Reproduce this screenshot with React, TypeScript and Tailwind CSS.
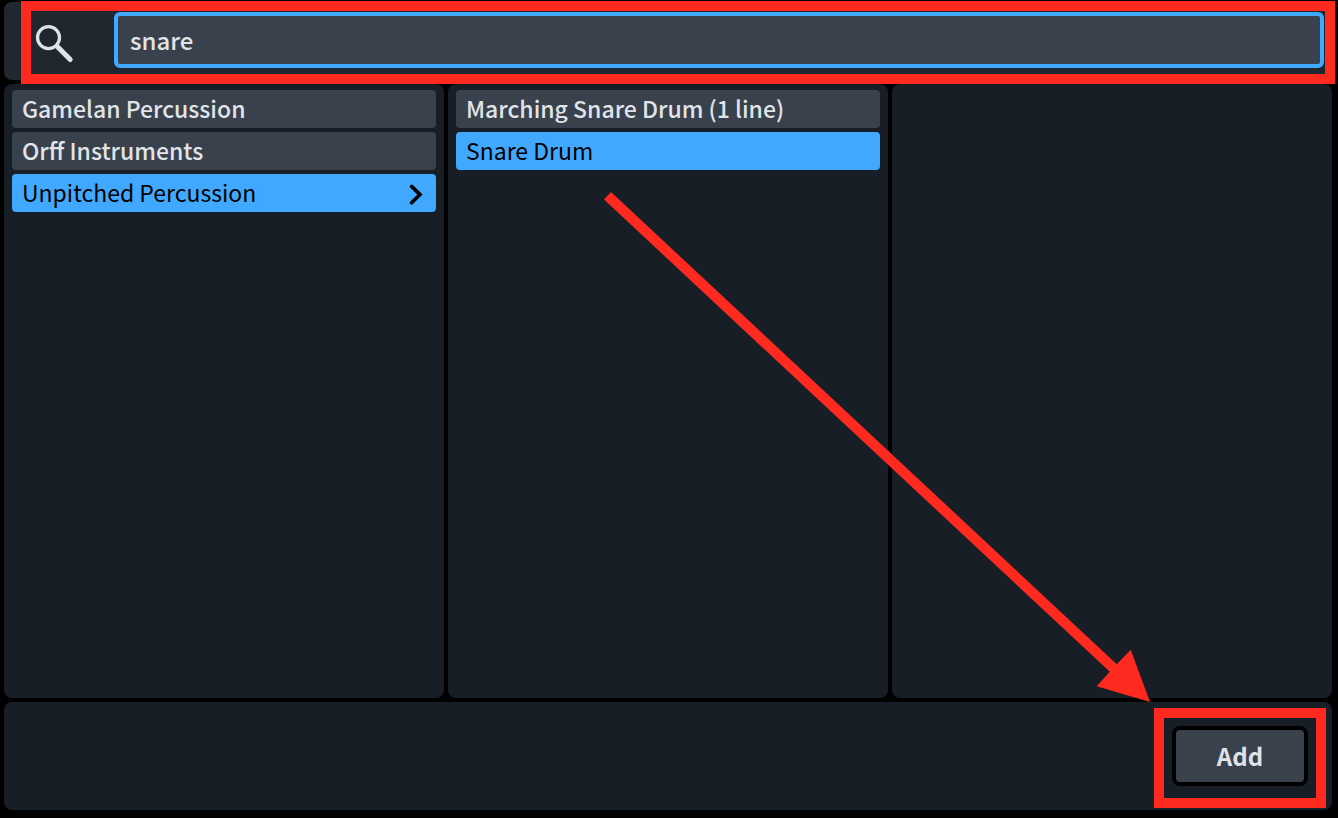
import { useState } from "react";

type Item = { name: string; hasChildren?: boolean };

const families: Item[] = [
  { name: "Gamelan Percussion" },
  { name: "Orff Instruments" },
  { name: "Unpitched Percussion", hasChildren: true },
];

const instruments: Item[] = [
  { name: "Marching Snare Drum (1 line)" },
  { name: "Snare Drum" },
];

function SearchIcon() {
  return (
    <svg viewBox="0 0 40 40" className="h-10 w-10" fill="none" stroke="#dfe2e8" aria-hidden="true">
      <circle cx="14.5" cy="13.6" r="11" strokeWidth="3.3" />
      <path d="M23 22.3L36.2 35.6" strokeWidth="5" strokeLinecap="round" />
    </svg>
  );
}

function Column({
  label,
  items,
  selected,
  onSelect,
}: {
  label: string;
  items: Item[];
  selected?: string;
  onSelect?: (name: string) => void;
}) {
  return (
    <section aria-label={label} className="rounded-lg bg-[#171e25] px-2 py-1.5">
      <ul className="flex flex-col gap-1">
        {items.map((item) => {
          const active = item.name === selected;
          return (
            <li key={item.name}>
              <button
                type="button"
                aria-pressed={active}
                onClick={() => onSelect?.(item.name)}
                className={
                  "flex h-[38px] w-full items-center justify-between rounded-sm px-2.5 text-left text-[23px] " +
                  (active ? "bg-[#40a9ff] text-black" : "bg-[#38414c] font-medium text-[#e1e4e8]")
                }
              >
                <span className="pb-0.5">{item.name}</span>
                {item.hasChildren && (
                  <svg viewBox="0 0 20 24" className="h-6 w-5" fill="none" stroke="black" strokeWidth="3.6" strokeLinecap="round" aria-hidden="true">
                    <path d="M5.6 5.4L14 13.6L5.6 21.8" />
                  </svg>
                )}
              </button>
            </li>
          );
        })}
      </ul>
    </section>
  );
}

export default function App() {
  const [query, setQuery] = useState("snare");
  const [family, setFamily] = useState("Unpitched Percussion");
  const [instrument, setInstrument] = useState("Snare Drum");

  return (
    <main className="relative flex min-h-screen flex-col gap-1 bg-black pt-0.5 pr-1.5 pb-2 pl-1 font-['Noto_Sans_CJK_SC',sans-serif]">
      <header className="relative flex items-start rounded-lg bg-[#21272e] pt-2.5 pr-2 pb-3 pl-[30px]">
        <label htmlFor="search" aria-label="Search instruments" className="w-20 shrink-0 pt-3">
          <SearchIcon />
        </label>
        <input
          id="search"
          type="text"
          value={query}
          onChange={(e) => setQuery(e.target.value)}
          className="h-14 min-w-0 flex-1 rounded-md border-4 border-[#40a9ff] bg-[#38414c] px-3 pb-0.5 text-2xl font-medium text-[#e1e4e8] outline-none"
        />
        <div className="pointer-events-none absolute -top-px -right-[3px] -bottom-1 left-[17px] z-10 border-10 border-[#ff2a1f]" />
      </header>

      <div className="grid flex-1 grid-cols-3 gap-1">
        <Column label="Families" items={families} selected={family} onSelect={setFamily} />
        <Column label="Instruments" items={instruments} selected={instrument} onSelect={setInstrument} />
        <Column label="Variants" items={[]} />
      </div>

      <footer className="flex justify-end rounded-lg bg-[#171e25] p-6">
        <div className="relative">
          <button
            type="button"
            className="h-[60px] w-[136px] rounded-lg border-4 border-black bg-[#38414c] text-2xl font-bold text-[#dfe2e8]"
          >
            Add
          </button>
          <div className="pointer-events-none absolute -inset-x-[18px] -top-[18px] -bottom-[22px] border-10 border-[#ff2a1f]" />
        </div>
      </footer>

      <svg
        viewBox="0 0 1338 818"
        preserveAspectRatio="none"
        className="pointer-events-none absolute inset-0 h-full w-full"
        fill="#ff2a1f"
        aria-hidden="true"
      >
        <path d="M604 199.5L611 192L1116.8 664.3L1130.7 649.8L1150 702L1096.7 686.3L1109.8 671.8Z" />
      </svg>
    </main>
  );
}
